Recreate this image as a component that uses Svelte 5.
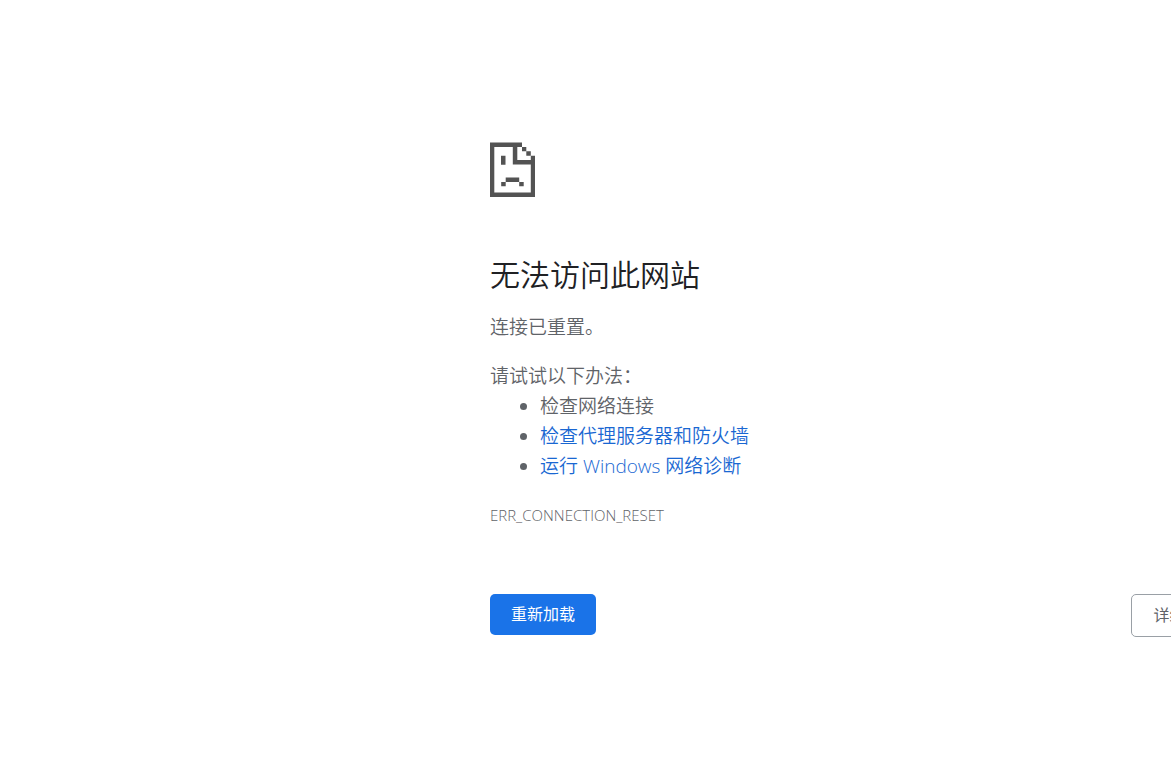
<script lang="ts">
  const suggestions = [
    { text: '检查网络连接', link: false },
    { text: '检查代理服务器和防火墙', link: true },
    { text: '运行 Windows 网络诊断', link: true },
  ]

  let showDetails = $state(false)
</script>

<svelte:head>
  <title>无法访问此网站</title>
</svelte:head>

<main class="error-page">
  <svg class="icon" viewBox="0 0 45 55" aria-hidden="true">
    <path d="M0 .5H32V5H27.3V18H40.8V13.7H45V55H0ZM4.3 5V50.6H40.8V22.5H22.8V5Z" fill-rule="evenodd" />
    <path d="M32 5H36.3V9.3H32ZM36.3 9.3H40.8V13.7H36.3ZM11 13.7H15.5V22.7H11ZM15.7 35.6H29.2V40H15.7ZM11.2 40H15.7V44.3H11.2ZM29.2 40H33.7V44.3H29.2Z" />
  </svg>

  <h1>无法访问此网站</h1>
  <p class="summary">连接已重置。</p>

  <div class="suggestions">
    <p>请试试以下办法：</p>
    <ul>
      {#each suggestions as item}
        <li>
          {#if item.link}
            <a href="#diagnose">{item.text}</a>
          {:else}
            {item.text}
          {/if}
        </li>
      {/each}
    </ul>
  </div>

  <p class="code">ERR_CONNECTION_RESET</p>

  <div class="buttons">
    <button class="reload" onclick={() => location.reload()}>重新加载</button>
    <button class="details" aria-expanded={showDetails} onclick={() => (showDetails = !showDetails)}>
      详细信息
    </button>
  </div>
</main>

<style>
  :global(body) {
    background: #fff;
    overflow-x: hidden;
  }

  .error-page {
    width: 64%;
    margin-left: 490px;
    padding-top: 142px;
    color: #5f6368;
    font-family: "Open Sans", "Noto Sans CJK SC", sans-serif;
    font-size: 19px;
    font-weight: 350;
    line-height: 30px;
  }

  .icon {
    display: block;
    width: 45px;
    height: 55px;
    fill: #535353;
  }

  h1 {
    margin: 60px 0 19px;
    color: #202124;
    font-size: 30px;
    font-weight: 350;
    line-height: 36px;
  }

  p {
    margin: 0;
  }

  .suggestions {
    margin-top: 19px;
  }

  ul {
    margin: 0;
    padding-left: 50px;
  }

  a {
    color: #1967d2;
    text-decoration: none;
  }

  .code {
    margin-top: 19px;
    font-size: 15px;
  }

  .buttons {
    display: flex;
    align-items: flex-start;
    justify-content: space-between;
    margin-top: 64px;
  }

  button {
    padding: 10px 21px;
    border: 0;
    border-radius: 5px;
    font-family: inherit;
    font-size: 16px;
    line-height: 21px;
    white-space: nowrap;
    cursor: pointer;
  }

  .reload {
    background: #1a73e8;
    color: #fff;
  }

  .details {
    border: 1px solid #9aa0a6;
    background: #fff;
    color: #5f6368;
  }
</style>
